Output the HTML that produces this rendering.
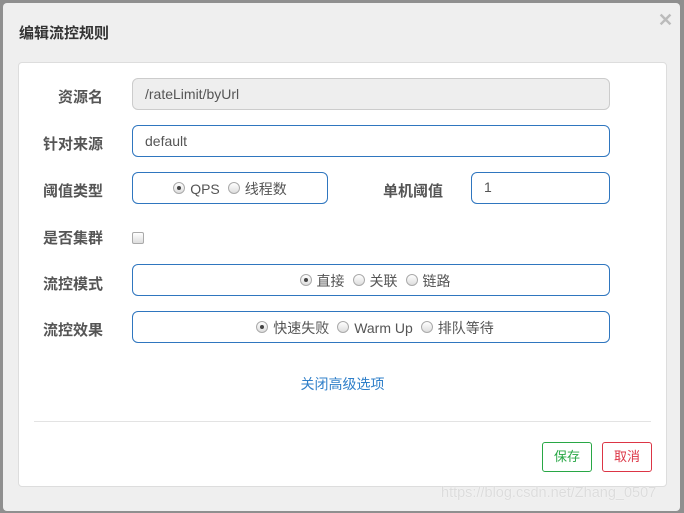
<!DOCTYPE html>
<html><head><meta charset="utf-8"><style>
*{box-sizing:border-box}
body{margin:0;width:684px;height:513px;background:#8f8f8f;position:relative;overflow:hidden;font-family:"Liberation Sans","Noto Sans CJK SC",sans-serif;color:#333}
.dlg{position:absolute;left:3px;top:3px;width:677px;height:508px;background:#efefef;border-radius:4px}
.title{position:absolute;left:16px;top:19px;font-size:15px;font-weight:bold;color:#333}
.x{position:absolute;left:655px;top:7px;font-size:18px;color:#bbb;font-weight:bold}
.panel{position:absolute;left:15px;top:59px;width:649px;height:425px;background:#fff;border:1px solid #ddd;border-radius:4px}
.lbl{position:absolute;font-size:15px;font-weight:bold;color:#555;text-align:right;width:84px}
.in{position:absolute;border:1px solid #2f76bf;border-radius:6px;height:32px;font-size:14px;color:#555;padding:7px 12px}
.ro{background:#eee;border-color:#ccc;color:#555}
.rg{position:absolute;border:1px solid #2f76bf;border-radius:6px;height:32px;font-size:14px;color:#555;display:flex;justify-content:center;align-items:center;padding-top:2px}
.r{display:inline-block;width:12px;height:12px;border:1px solid #aaa;border-radius:50%;background:linear-gradient(#fff,#ddd);margin:0 5px 0 8px;position:relative;top:-1px;vertical-align:middle}
.r.on::after{content:"";position:absolute;left:3px;top:3px;width:4px;height:4px;border-radius:50%;background:#444}
.cb{position:absolute;left:114px;top:169px;width:12px;height:12px;border:1px solid #aaa;border-radius:2px;background:linear-gradient(#fff,#ddd)}
.link{position:absolute;left:0;width:100%;top:311px;text-align:center;color:#2f7fc9;font-size:14px}
.hr{position:absolute;left:15px;right:15px;top:358px;border-top:1px solid #e3e3e3}
.btn{position:absolute;top:379px;width:50px;height:30px;border-radius:3px;font-size:13px;text-align:center;line-height:28px}
.wm{position:absolute;left:441px;top:485px;font-size:14.5px;color:#dcdcdc;text-shadow:0 0 1px #fff}
</style></head><body>
<div class="dlg">
<div class="title">编辑流控规则</div>
<div class="x">✕</div>
<div class="panel">
<div class="lbl" style="left:0;top:23px">资源名</div>
<div class="in ro" style="left:113px;top:15px;width:478px;height:32px">/rateLimit/byUrl</div>
<div class="lbl" style="left:0;top:70px">针对来源</div>
<div class="in" style="left:113px;top:62px;width:478px">default</div>
<div class="lbl" style="left:0;top:117px">阈值类型</div>
<div class="rg" style="left:113px;top:109px;width:196px"><span class="r on" style="margin-left:0"></span>QPS<span class="r"></span>线程数</div>
<div class="lbl" style="left:340px;top:117px">单机阈值</div>
<div class="in" style="left:452px;top:109px;width:139px;padding-top:6px">1</div>
<div class="lbl" style="left:0;top:164px">是否集群</div>
<div class="cb" style="left:113px"></div>
<div class="lbl" style="left:0;top:210px">流控模式</div>
<div class="rg" style="left:113px;top:201px;width:478px"><span class="r on"></span>直接<span class="r"></span>关联<span class="r"></span>链路</div>
<div class="lbl" style="left:0;top:256px">流控效果</div>
<div class="rg" style="left:113px;top:248px;width:478px"><span class="r on"></span>快速失败<span class="r"></span>Warm Up<span class="r"></span>排队等待</div>
<div class="link">关闭高级选项</div>
<div class="hr"></div>
<div class="btn" style="left:523px;border:1px solid #28a745;color:#28a745">保存</div>
<div class="btn" style="left:583px;border:1px solid #dc3545;color:#dc3545">取消</div>
</div>
</div>
<div class="wm">https://blog.csdn.net/Zhang_0507</div>
</body></html>
